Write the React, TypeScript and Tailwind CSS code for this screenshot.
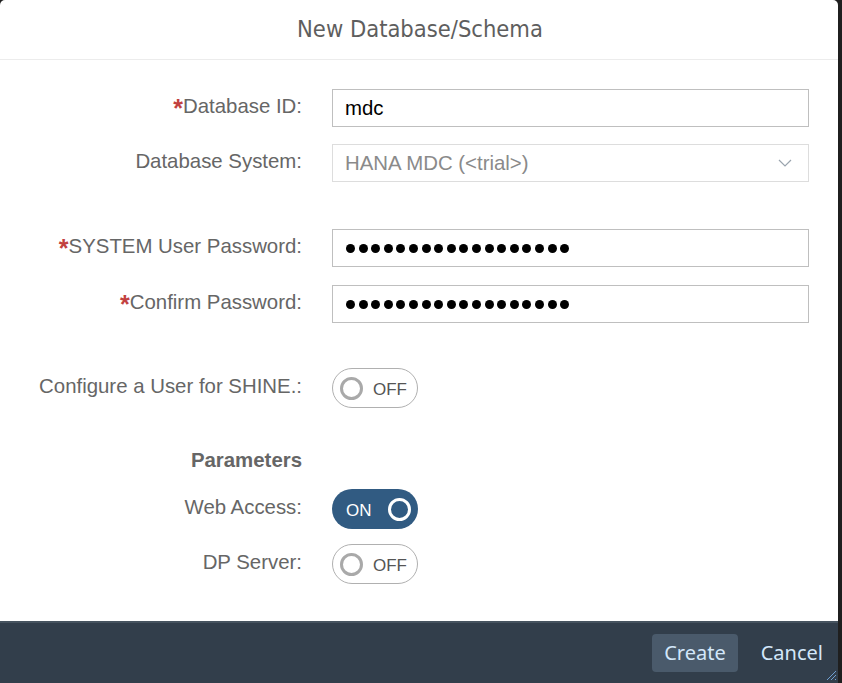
const label = "text-[20.4px] text-[#666666] text-right w-[302px] shrink-0 leading-none flex items-center justify-end pb-[3px]";

const Req = () => <span className="text-[#c2413f] font-bold text-[25px] leading-none mt-[4px]">*</span>;

const Dots = () => (
  <div className="flex gap-[3.6px] items-center">
    {[...Array(18)].map((_, i) => (
      <span key={i} className="block w-[9px] h-[9px] rounded-full bg-black" />
    ))}
  </div>
);

const Toggle = ({ on }: { on: boolean }) =>
  on ? (
    <div className="w-[86px] h-[40px] rounded-full bg-[#315b82] flex items-center justify-between pl-[14px] pr-[7px]">
      <span className="text-[17px] text-white leading-none mt-[2px]">ON</span>
      <span className="w-[23px] h-[23px] rounded-full border-[3px] border-white" />
    </div>
  ) : (
    <div className="w-[86px] h-[40px] rounded-full bg-white border border-[#b0b0b0] flex items-center pl-[7px] gap-[10px]">
      <span className="w-[23px] h-[23px] rounded-full border-[3px] border-[#a9a9a9]" />
      <span className="text-[17px] text-[#555555] leading-none mt-[2px]">OFF</span>
    </div>
  );

export default function App() {
  return (
    <div className="w-[842px] h-[683px] bg-[#1f1f1f] overflow-hidden" style={{ fontFamily: '"Liberation Sans", Arial, sans-serif' }}>
      <div className="w-[838px] h-[683px] bg-white rounded-t-[5px] flex flex-col relative">
        {/* header */}
        <div className="h-[60px] border-b border-[#ececec] flex items-center justify-center shrink-0">
          <span className="text-[23.5px] text-[#5e5e5e] pl-[2px]" style={{ fontFamily: '"DejaVu Sans Condensed", "Liberation Sans Narrow", "Open Sans", sans-serif', fontStretch: "condensed" }}>
            New Database/Schema
          </span>
        </div>

        {/* form */}
        <div className="flex-1 flex flex-col pt-[29px]">
          <div className="flex items-center gap-[30px] h-[38px]">
            <div className={label}><Req />Database ID:</div>
            <div className="w-[477px] h-[38px] border border-[#bfbfbf] flex items-center px-[12px] text-[20.4px] text-black">mdc</div>
          </div>
          <div className="flex items-center gap-[30px] h-[38px] mt-[17px]">
            <div className={label}>Database System:</div>
            <div className="w-[477px] h-[38px] border border-[#dddddd] flex items-center justify-between pl-[12px] pr-[16px] text-[20.4px] text-[#8a8a8a]">
              <span>HANA MDC (&lt;trial&gt;)</span>
              <svg width="14" height="8" viewBox="0 0 14 8" fill="none" stroke="#9aa4ae" strokeWidth="1.2">
                <path d="M1 1l6 6 6-6" />
              </svg>
            </div>
          </div>
          <div className="flex items-center gap-[30px] h-[38px] mt-[47px]">
            <div className={label}><Req />SYSTEM User Password:</div>
            <div className="w-[477px] h-[38px] border border-[#bfbfbf] flex items-center px-[13px]"><Dots /></div>
          </div>
          <div className="flex items-center gap-[30px] h-[38px] mt-[18px]">
            <div className={label}><Req />Confirm Password:</div>
            <div className="w-[477px] h-[38px] border border-[#bfbfbf] flex items-center px-[13px]"><Dots /></div>
          </div>
          <div className="flex items-center gap-[30px] h-[40px] mt-[45px]">
            <div className={label}>Configure a User for SHINE.:</div>
            <Toggle on={false} />
          </div>
          <div className="flex items-center h-[26px] mt-[41px]">
            <div className={`${label} font-bold`}>Parameters</div>
          </div>
          <div className="flex items-center gap-[30px] h-[40px] mt-[14px]">
            <div className={label}>Web Access:</div>
            <Toggle on={true} />
          </div>
          <div className="flex items-center gap-[30px] h-[40px] mt-[15px]">
            <div className={label}>DP Server:</div>
            <Toggle on={false} />
          </div>
        </div>

        {/* footer */}
        <div className="h-[62px] shrink-0 bg-[#323e4b] border-t-2 border-[#46535f] flex items-center justify-end gap-[11px] pr-[3px]" style={{ fontFamily: '"Noto Sans", "Open Sans", sans-serif' }}>
          <button className="h-[38px] px-[12px] rounded-[4px] bg-[#4a5a6b] text-[20px] text-[#d3e7fa]">Create</button>
          <button className="h-[38px] px-[12px] text-[20px] text-[#d3e7fa]">Cancel</button>
          <svg className="absolute right-[1px] bottom-[2px]" width="12" height="12" viewBox="0 0 12 12" stroke="#6f9fd0" strokeWidth="1">
            <path d="M11 2L2 11M11 6L6 11M11 10L10 11" />
          </svg>
        </div>
      </div>
    </div>
  );
}
